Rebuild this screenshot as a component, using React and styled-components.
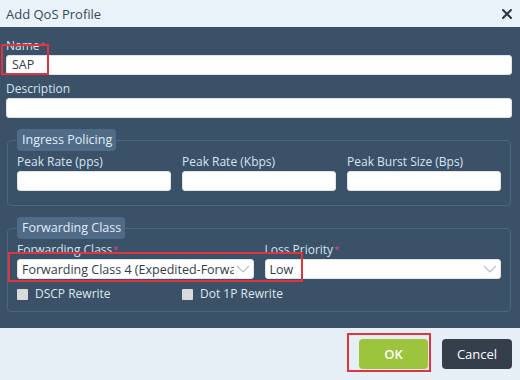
import React from "react";
import styled, { createGlobalStyle } from "styled-components";

const GlobalStyle = createGlobalStyle`
  html, body {
    margin: 0;
    padding: 0;
    background: #e9f1f9;
  }
  body {
    font-family: "Open Sans", "DejaVu Sans", sans-serif;
  }
  * {
    box-sizing: border-box;
  }
`;

const Dialog = styled.div`
  width: 520px;
  height: 380px;
  display: flex;
  flex-direction: column;
  background: #e9f1f9;
  overflow: hidden;
`;

const Header = styled.div`
  height: 27px;
  display: flex;
  align-items: center;
  justify-content: space-between;
  padding: 0 6px 0 6px;
  background: #e9f1f9;
  color: #3a4858;
  font-size: 13px;
`;

const CloseButton = styled.button`
  border: none;
  background: transparent;
  padding: 0;
  width: 14px;
  height: 14px;
  display: flex;
  align-items: center;
  justify-content: center;
  cursor: pointer;
`;

const Body = styled.div`
  background: #3a5168;
  padding: 11px 8px 16px 6px;
  display: flex;
  flex-direction: column;
  gap: 6px;
`;

const Field = styled.div`
  position: relative;
  display: flex;
  flex-direction: column;
  gap: 1px;
  min-width: 0;
`;

const Label = styled.label`
  font-size: 12px;
  line-height: 16px;
  color: #d6e4f0;
  white-space: nowrap;
`;

const Star = styled.span`
  color: #e0507c;
  font-size: 9px;
  vertical-align: top;
  margin-left: 1px;
`;

const TextInput = styled.div`
  height: 20px;
  background: #ffffff;
  border: 1px solid #dfe4ea;
  border-radius: 3px;
  padding: 0 5px;
  font-size: 12.5px;
  line-height: 18px;
  color: #333c45;
`;

const Group = styled.fieldset`
  margin: 5px 1px 0 1px;
  padding: 3px 9px ${(p) => p.$bottom}px 9px;
  border: 1px solid #4d6681;
  border-radius: 4px;
  min-width: 0;
`;

const Legend = styled.legend`
  background: #4f6b88;
  color: #e4ecf4;
  font-size: 12.5px;
  line-height: 22px;
  padding: 0 4px 0 5px;
  border-radius: 4px;
`;

const Grid = styled.div`
  position: relative;
  display: grid;
  grid-template-columns: repeat(${(p) => p.$cols}, minmax(0, 1fr));
  column-gap: 11px;
`;

const SelectBox = styled.div`
  height: 20px;
  display: flex;
  align-items: center;
  gap: 2px;
  background: #ffffff;
  border: 1px solid #dfe4ea;
  border-radius: 3px;
  padding: 0 3px 0 4px;
  font-size: 12.5px;
  color: #333c45;
`;

const SelectText = styled.span`
  overflow: hidden;
  white-space: nowrap;
  text-overflow: clip;
  flex: 1;
  min-width: 0;
`;

const CheckRow = styled(Grid)`
  margin-top: 7px;
`;

const Check = styled.label`
  display: flex;
  align-items: center;
  gap: 7px;
  font-size: 12px;
  line-height: 16px;
  color: #dfe7ef;
`;

const Box = styled.span`
  width: 11px;
  height: 11px;
  background: #d9dadb;
  border-radius: 1px;
`;

const Highlight = styled.div`
  position: absolute;
  border: 2px solid #e2343e;
  pointer-events: none;
  left: ${(p) => p.$l}px;
  top: ${(p) => p.$t}px;
  width: ${(p) => p.$w}px;
  height: ${(p) => p.$h}px;
`;

const Footer = styled.div`
  flex: 1;
  display: flex;
  justify-content: flex-end;
  align-items: flex-start;
  gap: 14px;
  padding: 11px 8px 0 0;
  background: #e6eef6;
`;

const Button = styled.button`
  position: relative;
  height: 30px;
  width: ${(p) => p.$w}px;
  border: none;
  border-radius: 4px;
  background: ${(p) => p.$bg};
  color: #ffffff;
  font-family: "Open Sans", "DejaVu Sans", sans-serif;
  font-size: 13px;
  font-weight: ${(p) => p.$weight || 400};
  cursor: pointer;
`;

const Chevron = () => (
  <svg width="14" height="8" viewBox="0 0 14 8">
    <polyline points="1,1 7,7 13,1" fill="none" stroke="#b9bfc7" strokeWidth="1.2" />
  </svg>
);

export default function App() {
  return (
    <>
      <GlobalStyle />
      <Dialog>
        <Header>
          <span>Add QoS Profile</span>
          <CloseButton aria-label="close">
            <svg width="12" height="12" viewBox="0 0 12 12">
              <path d="M2 2 L10 10 M10 2 L2 10" stroke="#263645" strokeWidth="2" strokeLinecap="round" />
            </svg>
          </CloseButton>
        </Header>
        <Body>
          <Field>
            <Label>
              Name<Star>*</Star>
            </Label>
            <TextInput>SAP</TextInput>
            <Highlight $l={-5} $t={6} $w={48} $h={31} />
          </Field>
          <Field>
            <Label>Description</Label>
            <TextInput />
          </Field>

          <Group $bottom={14}>
            <Legend>Ingress Policing</Legend>
            <Grid $cols={3}>
              <Field>
                <Label>Peak Rate (pps)</Label>
                <TextInput />
              </Field>
              <Field>
                <Label>Peak Rate (Kbps)</Label>
                <TextInput />
              </Field>
              <Field>
                <Label>Peak Burst Size (Bps)</Label>
                <TextInput />
              </Field>
            </Grid>
          </Group>

          <Group $bottom={9}>
            <Legend>Forwarding Class</Legend>
            <Grid $cols={2}>
              <Field>
                <Label>
                  Forwarding Class<Star>*</Star>
                </Label>
                <SelectBox>
                  <SelectText>Forwarding Class 4 (Expedited-Forwarding)</SelectText>
                  <Chevron />
                </SelectBox>
              </Field>
              <Field>
                <Label>
                  Loss Priority<Star>*</Star>
                </Label>
                <SelectBox>
                  <SelectText>Low</SelectText>
                  <Chevron />
                </SelectBox>
              </Field>
              <Highlight $l={-9} $t={10} $w={295} $h={30} />
            </Grid>
            <CheckRow $cols={3}>
              <Check>
                <Box />
                DSCP Rewrite
              </Check>
              <Check>
                <Box />
                Dot 1P Rewrite
              </Check>
            </CheckRow>
          </Group>
        </Body>
        <Footer>
          <Button $w={69} $bg="#9cc43c" $weight={600}>
            OK
            <Highlight $l={-12} $t={-6} $w={84} $h={39} />
          </Button>
          <Button $w={70} $bg="#353e4b">
            Cancel
          </Button>
        </Footer>
      </Dialog>
    </>
  );
}
